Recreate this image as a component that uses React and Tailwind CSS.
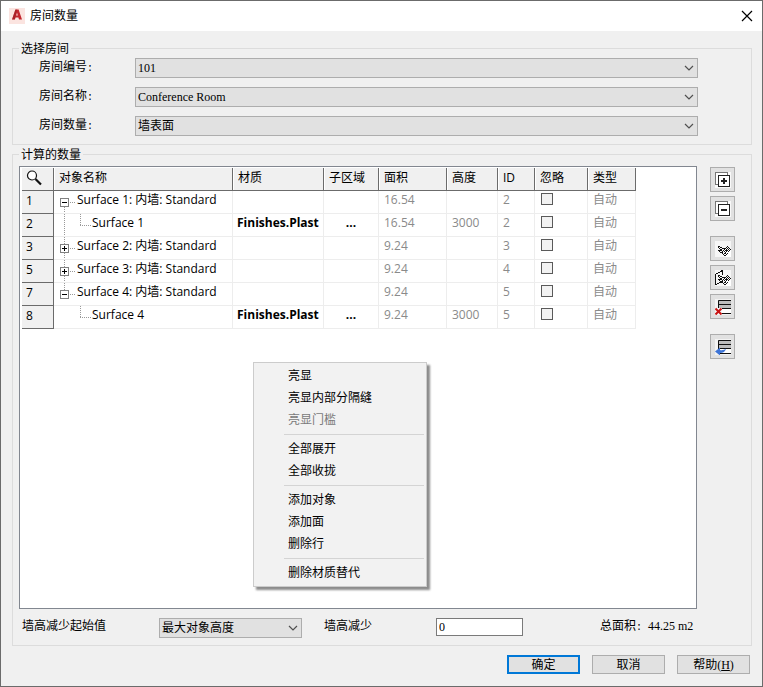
import React, { useState } from 'react';

const SONG = 'font-["Liberation_Serif","Noto_Sans_CJK_SC",serif]';

const ROOM_FIELDS = [
  { id: 'room-number', label: '房间编号', value: '101' },
  { id: 'room-name', label: '房间名称', value: 'Conference Room' },
  { id: 'room-quantity', label: '房间数量', value: '墙表面' },
];

const ROWS = [
  { no: 1, name: 'Surface 1: 内墙: Standard', open: true, area: '16.54', id: 2 },
  { no: 2, name: 'Surface 1', child: true, more: true, material: 'Finishes.Plast', area: '16.54', height: 3000, id: 2 },
  { no: 3, name: 'Surface 2: 内墙: Standard', area: '9.24', id: 3 },
  { no: 5, name: 'Surface 3: 内墙: Standard', area: '9.24', id: 4 },
  { no: 7, name: 'Surface 4: 内墙: Standard', open: true, last: true, area: '9.24', id: 5 },
  { no: 8, name: 'Surface 4', child: true, material: 'Finishes.Plast', area: '9.24', height: 3000, id: 5 },
];

const COLUMNS = [
  { label: '对象名称', width: 'w-[179px]' },
  { label: '材质', width: 'w-[91px]' },
  { label: '子区域', width: 'w-[55px]' },
  { label: '面积', width: 'w-[68px]' },
  { label: '高度', width: 'w-[51px]' },
  { label: 'ID', width: 'w-[37px]' },
  { label: '忽略', width: 'w-[53px]' },
  { label: '类型', width: 'w-[48px]' },
];

const MENU = [
  [{ label: '亮显' }, { label: '亮显内部分隔缝' }, { label: '亮显门槛', disabled: true }],
  [{ label: '全部展开' }, { label: '全部收拢' }],
  [{ label: '添加对象' }, { label: '添加面' }, { label: '删除行' }],
  [{ label: '删除材质替代' }],
];

function LogoIcon() {
  return (
    <svg width="16" height="16" viewBox="0 0 16 16" aria-hidden="true">
      <rect width="16" height="16" fill="#fbe4e0" />
      <path d="M6.4 1.5h3.2L13 11.5h-3l-.6-2H6.5l-.6 2H3zM7.2 7.4h1.6L8 4.6z" fill="#c2262e" fillRule="evenodd" />
      <path d="M6.4 1.5h1.6L5.9 11.5H3z" fill="#8e1a22" fillOpacity=".45" />
    </svg>
  );
}

function ExpandAllIcon() {
  return (
    <svg width="16" height="16" viewBox="0 0 16 16" aria-hidden="true">
      <rect width="16" height="16" fill="#f8f8f8" />
      <rect x="0.5" y="0.5" width="12" height="12" fill="#fff" stroke="#777" />
      <rect x="3.5" y="3.5" width="11" height="11" fill="#fff" stroke="#222" />
      <path d="M6 8h6v2H6zM8 6h2v6H8z" fill="#222" />
    </svg>
  );
}

function CollapseAllIcon() {
  return (
    <svg width="16" height="16" viewBox="0 0 16 16" aria-hidden="true">
      <rect width="16" height="16" fill="#f8f8f8" />
      <rect x="0.5" y="0.5" width="12" height="12" fill="#fff" stroke="#777" />
      <rect x="3.5" y="3.5" width="11" height="11" fill="#fff" stroke="#222" />
      <path d="M6 8h6v2H6z" fill="#222" />
    </svg>
  );
}

// Pointing hand, one run of pixels per move
const HAND =
  'M3 5.5h2M12 5.5h1M3 6.5h1M5 6.500h2M11 6.5h1M13 6.5h1M4 7.5h1M7 7.5h4M12 7.5h1M14 7.5h1M5 8.5h2M9 8.5h1M11 8.5h1M13 8.5h1M15 8.5h1' +
  'M3 9.5h4M8 9.5h1M10 9.5h3M14 9.5h1M4 10.5h1M7 10.5h1M9 10.5h1M11 10.5h1M13 10.5h1M5 11.5h3M10 11.5h1M7 12.5h1M9 12.5h2M12 12.5h1M8 13.5h1M11 13.5h1M9 14.5h2';

function AddObjectIcon() {
  return (
    <svg width="16" height="16" viewBox="0 0 16 16" shapeRendering="crispEdges" aria-hidden="true">
      <rect width="16" height="16" fill="#f6f6f6" />
      <path d="M9 8h7v8H11z" fill="#fff" />
      <path d={HAND} fill="none" stroke="#111" />
    </svg>
  );
}

function AddFaceIcon() {
  return (
    <svg width="16" height="16" viewBox="0 0 16 16" shapeRendering="crispEdges" aria-hidden="true">
      <rect width="16" height="16" fill="#f6f6f6" />
      <path d="M9 8h7v8H11z" fill="#fff" />
      <path d="M0.5 15V4.5L7.5 0.5V5M0.500 14.500L6.500 12" fill="none" stroke="#111" />
      <path d={HAND} fill="none" stroke="#111" />
    </svg>
  );
}

function RowsGlyph() {
  return (
    <>
      <rect width="16" height="16" fill="#f3f3f3" />
      <rect x="3" y="1" width="13" height="8" fill="#bdbdbd" />
      <rect x="3" y="9" width="13" height="6" fill="#fff" />
      <path d="M3.5 15V1.5H16M3 5.5H16M3 9.5H16M3 14.5H16" fill="none" stroke="#111" />
    </>
  );
}

function DeleteRowIcon() {
  return (
    <svg width="16" height="16" viewBox="0 0 16 16" aria-hidden="true">
      <RowsGlyph />
      <path d="M0 9h7v7H0z" fill="#f6f6f6" />
      <path d="M0.5 9.5l6 6M6.5 9.5l-6 6" stroke="#c81414" strokeWidth="2" />
    </svg>
  );
}

function RemoveOverrideIcon() {
  return (
    <svg width="16" height="16" viewBox="0 0 16 16" aria-hidden="true">
      <RowsGlyph />
      <path d="M0 12.5l5-4v2.5c2.500.5 4.500 0 6-1.500-.5 3-3 4.500-6 4.500v2.500z" fill="#3d74d6" />
    </svg>
  );
}

const TOOLS = [
  [{ label: '全部展开', Icon: ExpandAllIcon }, { label: '全部收拢', Icon: CollapseAllIcon }],
  [
    { label: '添加对象', Icon: AddObjectIcon },
    { label: '添加面', Icon: AddFaceIcon },
    { label: '删除行', Icon: DeleteRowIcon },
  ],
  [{ label: '删除材质替代', Icon: RemoveOverrideIcon }],
];

function SelectBox({ id, value }) {
  return (
    <div className="relative w-full">
      <select
        id={id}
        defaultValue={value}
        className={`block h-5 w-full appearance-none border border-[#adadad] bg-[#e1e1e1] pl-[2px] pr-6 text-xs text-black ${SONG}`}
      >
        <option>{value}</option>
      </select>
      <svg className="pointer-events-none absolute top-[7px] right-1" width="10" height="7" viewBox="0 0 10 7" aria-hidden="true">
        <path d="M1 1l4 4 4-4" fill="none" stroke="#505050" strokeWidth="1.2" />
      </svg>
    </div>
  );
}

// Dotted branch lines in front of an object name
function Branch({ row, first }) {
  if (row.child) {
    return (
      <svg width="38" height="23" shapeRendering="crispEdges" className="shrink-0" aria-hidden="true">
        {row.more && <path d="M10.5 0V23" stroke="#999" strokeDasharray="1 1" />}
        <path d="M26.5 0V12M26 11.5H37" fill="none" stroke="#999" strokeDasharray="1 1" />
      </svg>
    );
  }
  return (
    <button type="button" aria-label={row.open ? '收拢' : '展开'} className="h-[23px] w-[23px] shrink-0">
      <svg width="23" height="23" shapeRendering="crispEdges" className="block" aria-hidden="true">
        {!first && <path d="M10.5 0V7" stroke="#999" strokeDasharray="1 1" />}
        {!row.last && <path d="M10.5 16V23" stroke="#999" strokeDasharray="1 1" />}
        <path d="M16 11.5H22" stroke="#999" strokeDasharray="1 1" />
        <rect x="6.5" y="7.5" width="8" height="8" fill="#fff" stroke="#808080" />
        <path d="M8 11.5H13" stroke="#000" />
        {!row.open && <path d="M10.5 9V14" stroke="#000" />}
      </svg>
    </button>
  );
}

function QuantityTable() {
  const head = 'border-r border-b border-[#6b6b6b] bg-[#f0f0f0] pb-[2px] pl-[5px] text-left font-normal whitespace-nowrap shadow-[inset_1px_0_0_#fff]';
  const cell = 'border-r border-b border-[#ededed] pb-1 whitespace-nowrap';
  const muted = `${cell} pl-[5px] text-[#8a8a8a]`;

  return (
    <table className="table-fixed border-separate border-spacing-0 text-xs leading-[18px]">
      <thead>
        <tr className="h-[23px]">
          <th scope="col" className="w-8 border-r border-b border-[#6b6b6b] bg-[#f0f0f0] p-0">
            <button type="button" aria-label="查找" className="block pl-1">
              <svg width="18" height="18" viewBox="0 0 18 18" aria-hidden="true">
                <circle cx="6" cy="5.5" r="4.5" fill="#fff" stroke="#111" strokeWidth="1.2" />
                <path d="M9.5 9l5.500 5.500" stroke="#111" strokeWidth="2.2" />
              </svg>
            </button>
          </th>
          {COLUMNS.map(({ label, width }) => (
            <th key={label} scope="col" className={`${head} ${width}`}>{label}</th>
          ))}
        </tr>
      </thead>
      <tbody>
        {ROWS.map((row, i) => (
          <tr key={row.no} className="h-[23px]">
            <th scope="row" className="border-r border-b border-[#6b6b6b] bg-[#f0f0f0] pb-[2px] pl-1 text-left font-normal">{row.no}</th>
            <td className="border-r border-b border-[#ededed] p-0">
              <div className="flex h-[22px] overflow-hidden whitespace-nowrap">
                <Branch row={row} first={i === 0} />
                <span>{row.name}</span>
              </div>
            </td>
            <td className={`${cell} overflow-hidden pl-1 font-bold`}>{row.material}</td>
            <td className={`${cell} text-center font-bold`}>
              {row.child && <button type="button" aria-label="子区域">...</button>}
            </td>
            <td className={muted}>{row.area}</td>
            <td className={muted}>{row.height}</td>
            <td className={muted}>{row.id}</td>
            <td className="border-r border-b border-[#ededed] pb-[6px] pl-[6px]">
              <input
                type="checkbox"
                aria-label={`忽略 ${row.no}`}
                className="block h-3 w-3 appearance-none border border-[#5a5a5a] bg-[#f2f2f2] checked:bg-[#5a5a5a]"
              />
            </td>
            <td className={muted}>自动</td>
          </tr>
        ))}
      </tbody>
    </table>
  );
}

function ContextMenu() {
  return (
    <div
      role="menu"
      className="absolute top-[195px] left-[233px] w-[174px] border border-[#ccc] bg-[#f2f2f2] p-[2px] text-xs shadow-[3px_3px_2px_#8c8c8c]"
    >
      {MENU.map((group, i) => (
        <div key={group[0].label} role="group">
          {i > 0 && <div role="separator" className="my-[3px] ml-7 h-px bg-[#d4d4d4]" />}
          {group.map(({ label, disabled }) => (
            <button
              key={label}
              type="button"
              role="menuitem"
              disabled={disabled}
              className="block h-[22px] w-full pl-8 text-left hover:bg-[#90c8f6] disabled:text-[#7a7a7a] disabled:hover:bg-transparent"
            >
              {label}
            </button>
          ))}
        </div>
      ))}
    </div>
  );
}

export default function App() {
  const [reduction, setReduction] = useState('0');
  const button = 'h-[19px] w-[73px] bg-[#e1e1e1] leading-none';

  return (
    <div className='flex min-h-screen flex-col border border-[#6b6b6b] bg-[#f0f0f0] font-["Open_Sans","Noto_Sans_CJK_SC",sans-serif] text-xs text-black'>
      <header className="flex h-[30px] items-center bg-white pr-[9px] pl-2">
        <LogoIcon />
        <h1 className="ml-[5px] flex-1">房间数量</h1>
        <button type="button" aria-label="关闭">
          <svg width="12" height="12" viewBox="0 0 12 12" aria-hidden="true">
            <path d="M1 1l10 10M11 1L1 11" stroke="#000" strokeWidth="1.2" />
          </svg>
        </button>
      </header>

      <main className="flex flex-1 flex-col gap-[3px] pt-[11px] pr-[10px] pl-[11px]">
        <fieldset className="border border-[#dcdcdc] pt-[3px] pr-[53px] pb-2 pl-[26px]">
          <legend className="-ml-5 px-[2px] leading-[13px]">选择房间</legend>
          <div className="flex flex-col gap-[9px]">
            {ROOM_FIELDS.map(({ id, label, value }) => (
              <div key={id} className="flex">
                <label htmlFor={id} className="w-24 shrink-0 leading-[18px]">
                  {label}<span className="font-mono text-[10px]">:</span>
                </label>
                <SelectBox id={id} value={value} />
              </div>
            ))}
          </div>
        </fieldset>

        <fieldset className="flex flex-1 flex-col gap-[9px] border border-[#dcdcdc] pt-[5px] pr-4 pb-[7px] pl-[6px]">
          <legend className="px-[2px] leading-[13px]">计算的数量</legend>
          <div className="flex flex-1 gap-[13px]">
            <div className="relative min-h-[443px] flex-1 border border-[#828790] bg-white pt-px pl-[2px]">
              <QuantityTable />
              <ContextMenu />
            </div>
            <div className="flex flex-col gap-[15px] pt-px">
              {TOOLS.map((group) => (
                <div key={group[0].label} className="flex flex-col gap-1">
                  {group.map(({ label, Icon }) => (
                    <button
                      key={label}
                      type="button"
                      aria-label={label}
                      className="flex h-[25px] w-[25px] items-center justify-center border border-[#adadad] bg-[#e1e1e1]"
                    >
                      <Icon />
                    </button>
                  ))}
                </div>
              ))}
            </div>
          </div>

          <div className="flex pr-[39px] pl-[3px] leading-4">
            <label htmlFor="reduction-start" className="w-[137px]">墙高减少起始值</label>
            <div className="w-[143px]">
              <SelectBox id="reduction-start" value="最大对象高度" />
            </div>
            <label htmlFor="reduction" className="ml-[22px] w-[112px]">墙高减少</label>
            <input
              id="reduction"
              value={reduction}
              onChange={(e) => setReduction(e.target.value)}
              className={`h-[18px] w-[87px] border border-[#7a7a7a] bg-white px-[2px] ${SONG}`}
            />
            <p className="ml-auto w-24">
              总面积<span className="font-mono text-[10px]">: </span><span className={SONG}>44.25 m2</span>
            </p>
          </div>
        </fieldset>
      </main>

      <footer className="flex justify-end gap-3 pt-[9px] pr-3 pb-3">
        <button type="button" className={`${button} border-2 border-[#0078d7]`}>确定</button>
        <button type="button" className={`${button} border border-[#adadad]`}>取消</button>
        <button type="button" className={`${button} border border-[#adadad]`}>
          帮助<span className={SONG}>(<u>H</u>)</span>
        </button>
      </footer>
    </div>
  );
}
